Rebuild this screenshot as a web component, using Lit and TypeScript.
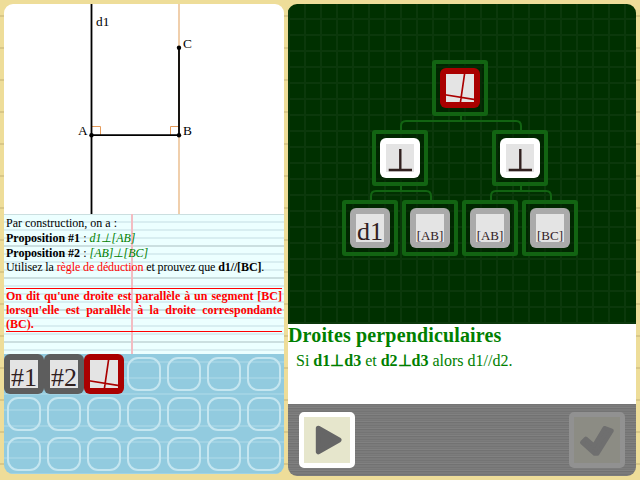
import { LitElement, html, css, svg } from "lit";
import { customElement, property } from "lit/decorators.js";

type Kind = "prop" | "rule" | "perp" | "object";

@customElement("game-tile")
class GameTile extends LitElement {
  @property() kind: Kind = "object";
  @property() label = "";

  static styles = css`
    :host { display: block; width: 40px; height: 40px; }
    svg { display: block; overflow: visible; }
    text { font-family: "Liberation Serif", serif; fill: #30201f; text-anchor: middle; }
    .prop { fill: #5d5d5d; }
    .rule { fill: #aa0000; }
    .perp { fill: #ffffff; }
    .object { fill: #aaaaaa; }
    .face { fill: #e4e4e4; }
  `;

  private glyph() {
    if (this.kind === "rule") {
      return svg`<path d="M0.3 26 L40 32.3 M24.7 5 L19.6 40" stroke="#aa0000" stroke-width="1.7" fill="none"/>`;
    }
    if (this.kind === "perp") {
      return svg`<path d="M20.3 11 V32 M8.7 32 H32" stroke="#30201f" stroke-width="2.4" fill="none"/>`;
    }
    const small = this.label.length > 2;
    return svg`<text x="20" y="32" font-size=${small ? 13 : 26}>${this.label}</text>`;
  }

  render() {
    return html`<svg width="40" height="40" viewBox="0 0 40 40">
      <rect class=${this.kind} width="40" height="40" rx="6"></rect>
      <rect class="face" x="6" y="6" width="28" height="28"></rect>
      ${this.glyph()}
    </svg>`;
  }
}

@customElement("app-root")
class AppRoot extends LitElement {
  static styles = css`
    :host {
      display: flex;
      gap: 4px;
      box-sizing: border-box;
      width: 640px;
      height: 480px;
      padding: 4px;
      overflow: hidden;
      font-family: "Liberation Serif", serif;
      background: repeating-linear-gradient(to bottom, transparent 0 15px, #d9c787 15px 17px, transparent 17px 32px) #eedd99;
    }
    .left { width: 280px; height: 470px; border-radius: 9px; overflow: hidden; }
    .right { width: 348px; height: 472px; border-radius: 9px; overflow: hidden; }
    .figure { display: block; background: #fff; }
    .figure text { font-size: 13.33px; fill: #000; }
    .paper {
      height: 140px;
      box-sizing: border-box;
      padding: 2px;
      font-size: 12px;
      line-height: 14px;
      color: #000;
      background:
        linear-gradient(#f3bcc2, #f3bcc2) 127px 0 / 2px 100% no-repeat,
        repeating-linear-gradient(to bottom, #cbdfe0 0 1px, transparent 1px 31px, #cbdfe0 31px 32px),
        repeating-linear-gradient(to bottom, #d8eef1 0 1px, transparent 1px 7px, #d8eef1 7px 8px),
        #ecffff;
    }
    .row { height: 14px; white-space: nowrap; }
    .tall { height: 15px; }
    .low { line-height: 15px; }
    .tight { letter-spacing: -0.11px; }
    .math { color: #008000; font-style: italic; }
    .red { color: #f00; }
    .definition {
      margin-top: 14px;
      border-top: 1px solid #f00;
      border-bottom: 1px solid #f00;
      color: #f00;
      font-weight: bold;
      text-align: justify;
    }
    .inventory {
      display: grid;
      grid-template-columns: repeat(7, 40px);
      grid-auto-rows: 40px;
      background: repeating-linear-gradient(to bottom, transparent 0 7px, #a1d3e4 7px 9px, transparent 9px 16px) #92cbdf;
    }
    .slot { box-sizing: border-box; margin: 3px; border: 2px solid #c5e6f0; border-radius: 11px; }
    .board {
      position: relative;
      height: 320px;
      background:
        repeating-linear-gradient(to right, #0b380b 0 2px, transparent 2px 16px),
        repeating-linear-gradient(to bottom, transparent 0 14px, #0b380b 14px 16px),
        #003000;
    }
    .links { position: absolute; left: 0; top: 0; }
    .node {
      position: absolute;
      box-sizing: border-box;
      width: 56px;
      height: 56px;
      padding: 4px;
      border: 4px solid #126412;
      border-radius: 3px;
      background: rgba(0, 30, 0, 0.5);
    }
    .rule { height: 80px; background: #fff; color: #008000; }
    .rule-title { margin: 0; font-size: 20px; line-height: 23px; letter-spacing: 0.15px; font-weight: bold; white-space: nowrap; }
    .rule-text { margin: 4px 0 0 8px; font-size: 16px; line-height: 20px; white-space: nowrap; }
    .toolbar {
      display: flex;
      justify-content: space-between;
      box-sizing: border-box;
      height: 72px;
      padding: 8px 11px;
      background: repeating-linear-gradient(to bottom, #747474 0 1px, #7c7c7c 1px 2px, #777 2px 3px, #818181 3px 4px, #727272 4px 5px, #7b7b7b 5px 7px);
    }
    .button {
      box-sizing: border-box;
      width: 56px;
      height: 56px;
      border: 5px solid #fff;
      border-radius: 5px;
      background: #e6e6cc;
    }
    .button svg { display: block; }
    .off { border-color: #919191; background: #8c8c84; }
  `;

  private nodes: [number, number, Kind, string][] = [
    [144, 56, "rule", ""],
    [84, 126, "perp", ""],
    [204, 126, "perp", ""],
    [54, 196, "object", "d1"],
    [114, 196, "object", "[AB]"],
    [174, 196, "object", "[AB]"],
    [234, 196, "object", "[BC]"],
  ];

  render() {
    return html`
      <section class="left">
        <svg class="figure" width="280" height="210" viewBox="0 0 280 210">
          <path d="M175 0 V210" stroke="#f0cfac" stroke-width="2" />
          <path d="M88 122.5 H96.5 V131 M175 122.5 H166.5 V131" stroke="#e59b5a" fill="none" />
          <path d="M87.5 0 V210" stroke="#000" stroke-width="1.8" />
          <path d="M87.5 131.2 H175 V43.5" stroke="#000" stroke-width="1.8" fill="none" />
          <circle cx="87.5" cy="131.2" r="2.2" /><circle cx="175" cy="131.2" r="2.2" /><circle cx="175" cy="43.7" r="2.2" />
          <text x="92" y="22">d1</text><text x="179" y="44">C</text>
          <text x="74" y="131">A</text><text x="179" y="131">B</text>
        </svg>
        <div class="paper">
          <div class="row tall">Par construction, on a :</div>
          <div class="row tall low"><b>Proposition #1</b> : <span class="math">d1⊥[AB]</span></div>
          <div class="row low"><b>Proposition #2</b> : <span class="math">[AB]⊥[BC]</span></div>
          <div class="row tight">Utilisez la <span class="red">règle de déduction</span> et prouvez que <b>d1//[BC]</b>.</div>
          <div class="definition">On dit qu'une droite est parallèle à un segment [BC] lorsqu'elle est parallèle à la droite correspondante (BC).</div>
        </div>
        <div class="inventory">
          <game-tile kind="prop" label="#1"></game-tile>
          <game-tile kind="prop" label="#2"></game-tile>
          <game-tile kind="rule"></game-tile>
          ${Array.from({ length: 18 }, () => html`<div class="slot"></div>`)}
        </div>
      </section>
      <section class="right">
        <div class="board">
          <svg class="links" width="348" height="320" fill="none" stroke="#126412" stroke-width="2">
            <path d="M173 112 V117 M113 127 V122 Q113 117 118 117 H228 Q233 117 233 122 V127" />
            <path d="M113 182 V187 M83 197 V192 Q83 187 88 187 H138 Q143 187 143 192 V197" />
            <path d="M233 182 V187 M203 197 V192 Q203 187 208 187 H258 Q263 187 263 192 V197" />
          </svg>
          ${this.nodes.map(([x, y, kind, label]) => html`
            <div class="node" style="left:${x}px;top:${y}px"><game-tile kind=${kind} label=${label}></game-tile></div>`)}
        </div>
        <div class="rule">
          <h1 class="rule-title">Droites perpendiculaires</h1>
          <p class="rule-text">Si <b>d1⊥d3</b> et <b>d2⊥d3</b> alors d1//d2.</p>
        </div>
        <div class="toolbar">
          <div class="button">
            <svg width="46" height="46" viewBox="0 0 46 46"><path d="M14.3 11.2 L35 23 L14.3 34.8 Z" fill="#666" stroke="#666" stroke-width="5" stroke-linejoin="round" /></svg>
          </div>
          <div class="button off">
            <svg width="46" height="46" viewBox="0 0 46 46"><path d="M8 25.5 L11.8 21.6 L20 28.6 L30.5 11 L37.8 13.6 L23.5 36.8 L20.5 36.8 Z" fill="#6f6f6f" stroke="#6f6f6f" stroke-width="4" stroke-linejoin="round" /></svg>
          </div>
        </div>
      </section>
    `;
  }
}
